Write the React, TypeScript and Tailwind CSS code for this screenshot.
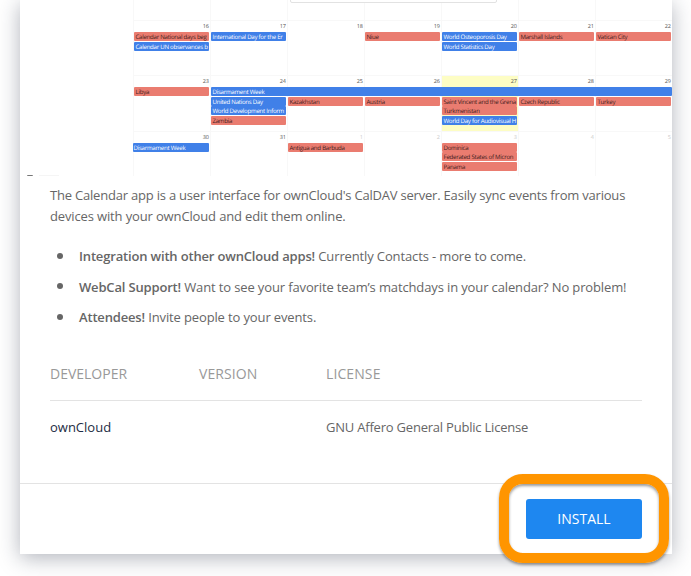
import clsx from "clsx";

type CalEvent = { label: string; tone: "red" | "blue"; place: string };
type Week = { days: string[]; muted: number; today?: number; events: CalEvent[] };

const columns = [
  "col-start-1",
  "col-start-2",
  "col-start-3",
  "col-start-4",
  "col-start-5",
  "col-start-6",
  "col-start-7",
];

const weeks: Week[] = [
  {
    days: ["16", "17", "18", "19", "20", "21", "22"],
    muted: 7,
    events: [
      { label: "Calendar National days beg", tone: "red", place: "col-start-1 row-start-2 ml-px mr-px" },
      { label: "Calendar UN observances b", tone: "blue", place: "col-start-1 row-start-3 ml-px mr-px" },
      { label: "International Day for the Er", tone: "blue", place: "col-start-2 row-start-2 ml-px mr-px" },
      { label: "Niue", tone: "red", place: "col-start-4 row-start-2 ml-px mr-px" },
      { label: "World Osteoporosis Day", tone: "blue", place: "col-start-5 row-start-2 ml-px mr-px" },
      { label: "World Statistics Day", tone: "blue", place: "col-start-5 row-start-3 ml-px mr-px" },
      { label: "Marshall Islands", tone: "red", place: "col-start-6 row-start-2 ml-px mr-px" },
      { label: "Vatican City", tone: "red", place: "col-start-7 row-start-2 ml-px mr-px" },
    ],
  },
  {
    days: ["23", "24", "25", "26", "27", "28", "29"],
    muted: 7,
    today: 4,
    events: [
      { label: "Libya", tone: "red", place: "col-start-1 row-start-2 ml-px mr-px" },
      { label: "Disarmament Week", tone: "blue", place: "col-start-2 col-span-6 row-start-2 ml-px" },
      { label: "United Nations Day", tone: "blue", place: "col-start-2 row-start-3 ml-px mr-px" },
      { label: "World Development Inform", tone: "blue", place: "col-start-2 row-start-4 ml-px mr-px" },
      { label: "Zambia", tone: "red", place: "col-start-2 row-start-5 ml-px mr-px" },
      { label: "Kazakhstan", tone: "red", place: "col-start-3 row-start-3 ml-px mr-px" },
      { label: "Austria", tone: "red", place: "col-start-4 row-start-3 ml-px mr-px" },
      { label: "Saint Vincent and the Grena", tone: "red", place: "col-start-5 row-start-3 ml-px mr-px" },
      { label: "Turkmenistan", tone: "red", place: "col-start-5 row-start-4 ml-px mr-px" },
      { label: "World Day for Audiovisual H", tone: "blue", place: "col-start-5 row-start-5 ml-px mr-px" },
      { label: "Czech Republic", tone: "red", place: "col-start-6 row-start-3 ml-px mr-px" },
      { label: "Turkey", tone: "red", place: "col-start-7 row-start-3 ml-px mr-px" },
    ],
  },
  {
    days: ["30", "31", "1", "2", "3", "4", "5"],
    muted: 2,
    events: [
      { label: "Disarmament Week", tone: "blue", place: "col-start-1 row-start-2 pl-[0.5px] mr-px" },
      { label: "Antigua and Barbuda", tone: "red", place: "col-start-3 row-start-2 ml-px mr-px" },
      { label: "Dominica", tone: "red", place: "col-start-5 row-start-2 ml-px mr-px" },
      { label: "Federated States of Micron", tone: "red", place: "col-start-5 row-start-3 ml-px mr-px" },
      { label: "Panama", tone: "red", place: "col-start-5 row-start-4 ml-px mr-px" },
    ],
  },
];

function WeekRow({ week }: { week: Week }) {
  return (
    <div className="grid h-[55.3px] shrink-0 grid-cols-[repeat(7,77px)] grid-rows-[12px_9.6px_9.6px_9.6px_9.6px_4.9px]">
      {week.days.map((day, i) => (
        <div
          key={day}
          className={clsx(
            "row-span-full row-start-1 border-t border-l border-[#f8f8f8] pt-[1px] pr-[1px] text-right text-[5.5px] leading-[8px]",
            columns[i],
            i === week.today && "bg-[#fdfdc4]",
            i >= week.muted ? "text-[#ccc]" : "text-[#555]",
          )}
        >
          {day}
        </div>
      ))}
      {week.events.map((event) => (
        <div
          key={event.label}
          className={clsx(
            "mb-[0.6px] overflow-hidden rounded-[1px] text-[6.1px] leading-[9px] tracking-[-0.26px] whitespace-nowrap",
            event.place,
            !event.place.includes("pl-") && "pl-[1.5px]",
            event.tone === "red" ? "bg-[#ea7c70] text-[#40201d]" : "bg-[#4080e8] text-white",
          )}
        >
          {event.label}
        </div>
      ))}
    </div>
  );
}

function CalendarPreview() {
  return (
    <div className="relative flex h-44 overflow-hidden [text-rendering:geometricPrecision]">
      <div className="flex w-[113px] shrink-0 items-end gap-1.5 pl-[7px]">
        <div className="h-px w-1.5 rounded-t-full bg-[#777]" />
        <div className="h-px w-5 bg-[#f5f5f5]" />
      </div>
      <div className="flex flex-col">
        <div className="grid h-5 shrink-0 grid-cols-[repeat(7,77px)]">
          {columns.map((column) => (
            <div key={column} className="border-l border-[#f8f8f8]" />
          ))}
        </div>
        {weeks.map((week) => (
          <WeekRow key={week.days[0]} week={week} />
        ))}
      </div>
      <div className="absolute -top-4 left-[270px] h-[19px] w-[207px] rounded-xs border border-[#e2e2e2] bg-white" />
    </div>
  );
}

const features = [
  { title: "Integration with other ownCloud apps!", text: "Currently Contacts - more to come." },
  { title: "WebCal Support!", text: "Want to see your favorite team’s matchdays in your calendar? No problem!" },
  { title: "Attendees!", text: "Invite people to your events." },
];

export default function App() {
  return (
    <div className="h-[576px] w-[691px] overflow-hidden bg-white font-['Open_Sans','Noto_Sans',sans-serif] text-[13px] text-[#666]">
      <div className="ml-5 flex h-[554px] w-[652px] flex-col bg-white shadow-[0_4px_20px_rgba(25,35,60,0.34)]">
        <CalendarPreview />
        <div className="flex h-[307px] flex-col px-[30px] pt-[9px]">
          <p className="leading-[21px] tracking-[-0.205px]">
            The Calendar app is a user interface for ownCloud's CalDAV server. Easily sync events from various{" "}
            <span className="tracking-[-0.14px]">devices with your ownCloud and edit them online.</span>
          </p>
          <ul className="mt-[19px] flex flex-col gap-[9.5px]">
            {features.map((feature) => (
              <li
                key={feature.title}
                className="flex items-center leading-[21px] tracking-[-0.13px] whitespace-nowrap"
              >
                <span className="mr-4 mb-[1.5px] ml-[7px] size-1.5 rounded-full bg-[#666]" />
                <span>
                  <strong className="font-semibold tracking-[-0.17px]">{feature.title}</strong> {feature.text}
                </span>
              </li>
            ))}
          </ul>
          <div className="mt-[35px] grid h-[38px] grid-cols-[149px_127px_1fr] border-b border-[#e3e3e3] text-sm leading-[21px] text-[#999]">
            <span>DEVELOPER</span>
            <span className="tracking-[0.1px]">VERSION</span>
            <span className="tracking-[0.1px]">LICENSE</span>
          </div>
          <div className="mt-4 grid grid-cols-[149px_127px_1fr] leading-[21px]">
            <span className="text-[#1d2d44]">ownCloud</span>
            <span />
            <span className="tracking-[-0.21px]">GNU Affero General Public License</span>
          </div>
        </div>
        <div className="flex flex-1 justify-end border-t border-[#e3e3e3] pt-[15px] pr-[30px]">
          <div className="relative h-10 w-[116px]">
            <button className="h-10 w-[116px] rounded-[3px] bg-[#1e87f0] text-sm text-white">INSTALL</button>
            <div className="absolute -top-[25px] -left-[27px] h-[89px] w-[170px] rounded-[24px] border-10 border-[#ff9500] shadow-[0_2px_3px_rgba(0,0,0,0.4),inset_0_2px_3px_rgba(0,0,0,0.4)]" />
          </div>
        </div>
      </div>
    </div>
  );
}
